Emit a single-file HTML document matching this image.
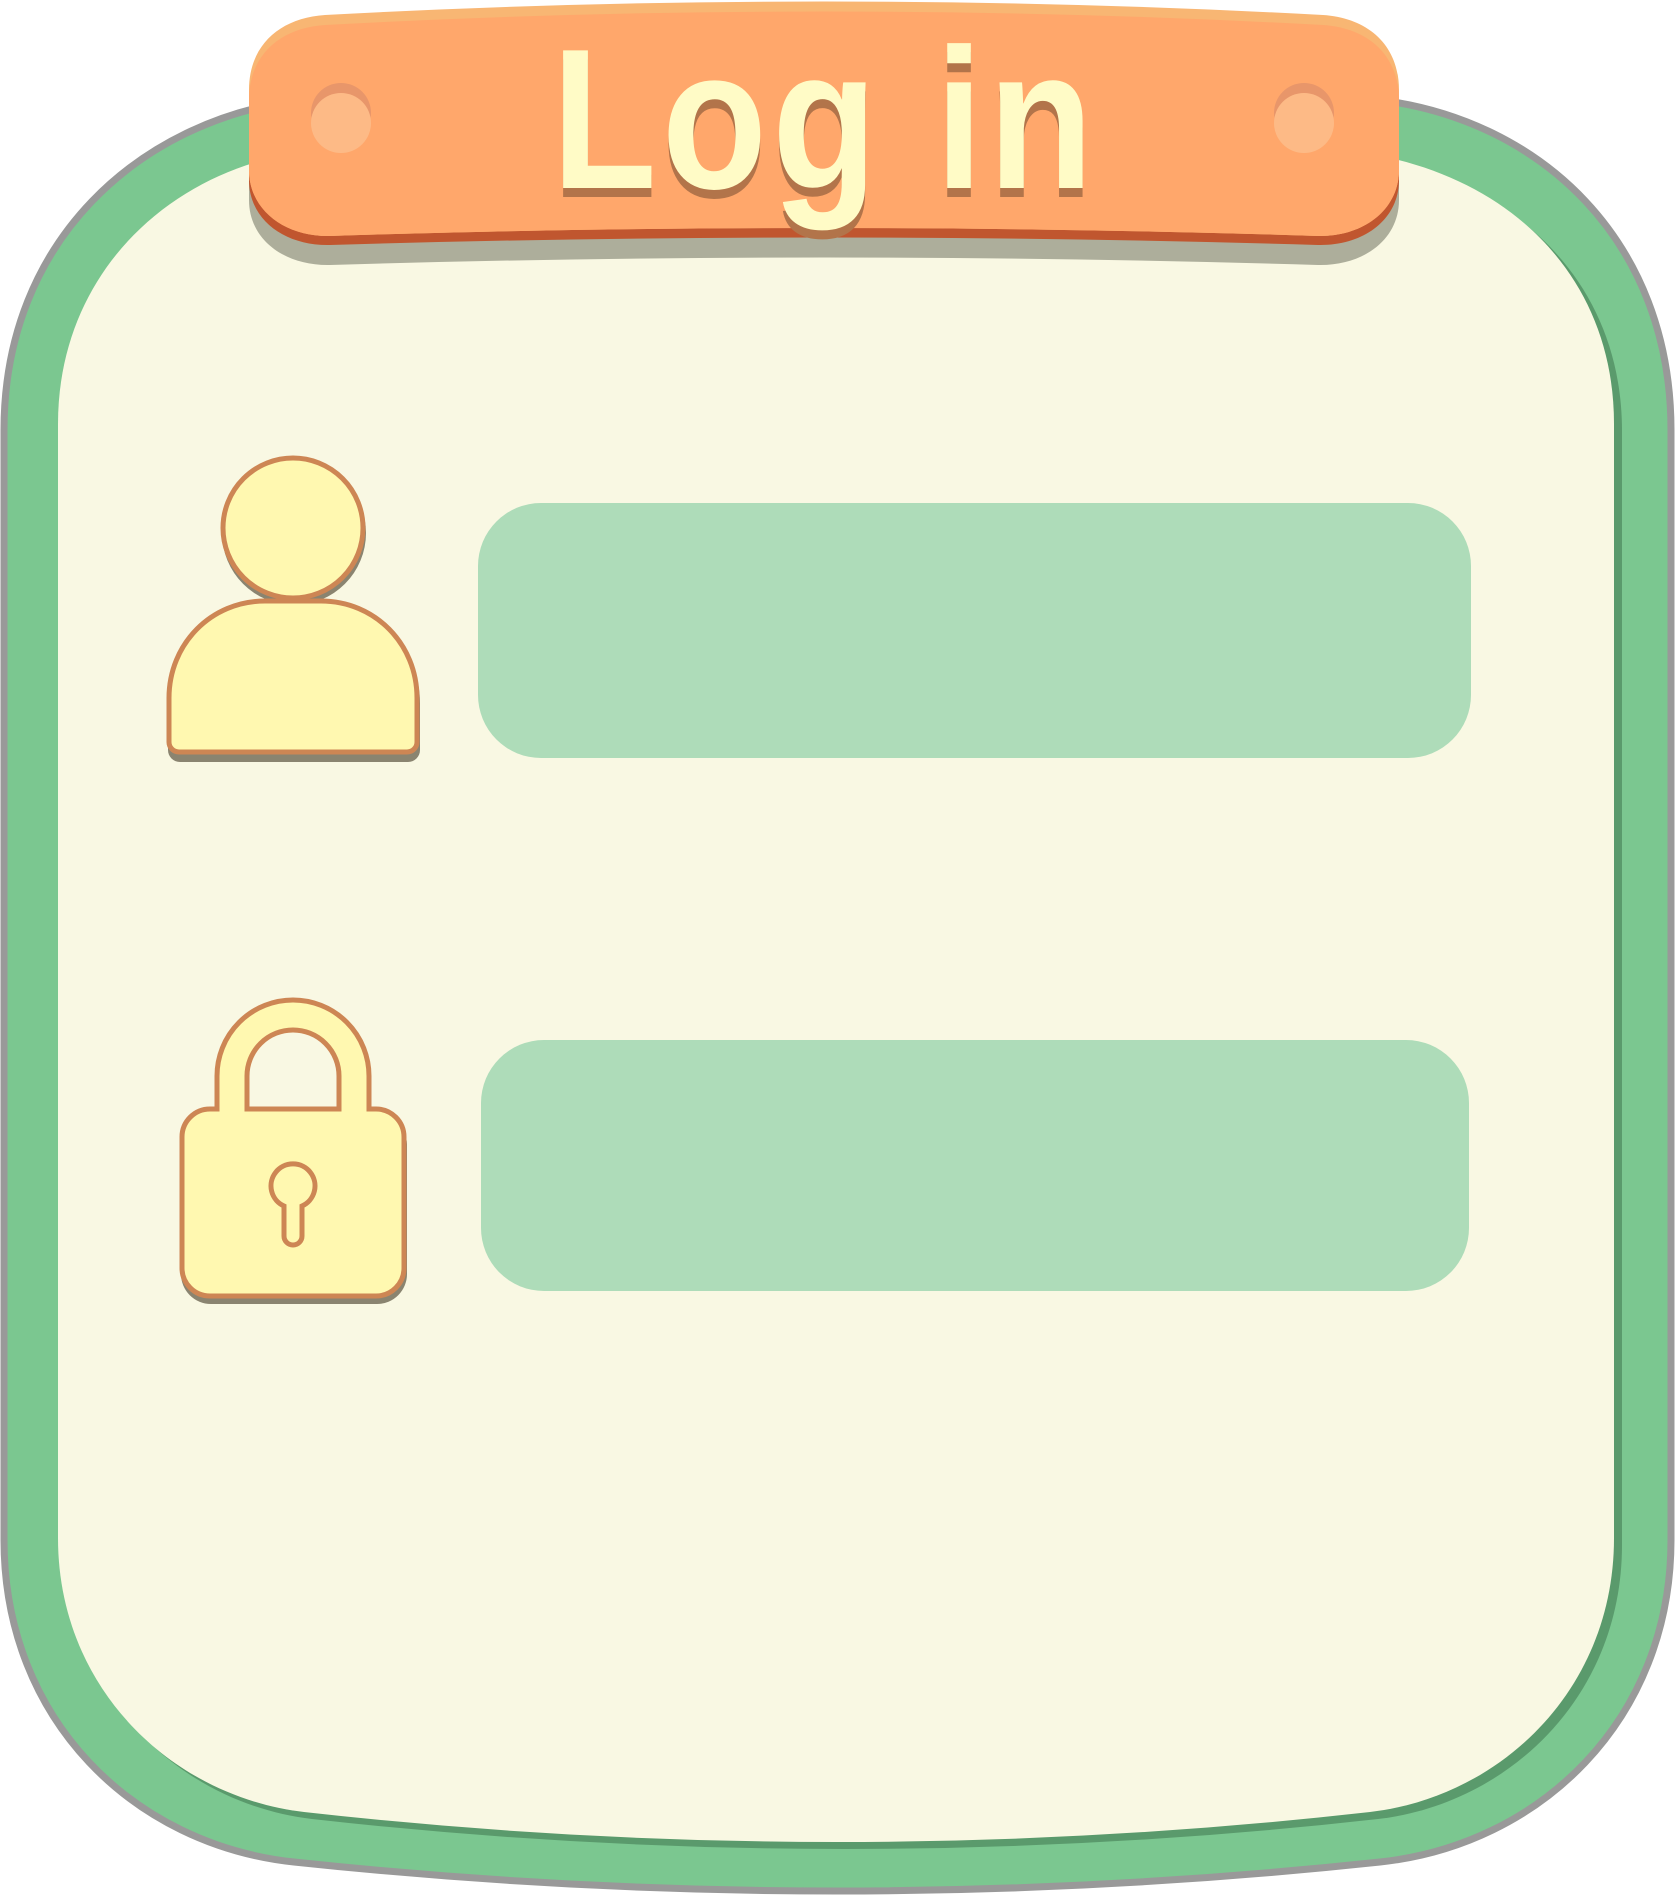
<!DOCTYPE html>
<html><head><meta charset="utf-8"><style>
html,body{margin:0;padding:0;background:#fff;width:1675px;height:1901px;overflow:hidden}
svg{display:block}
</style></head><body>
<svg width="1675" height="1901" viewBox="0 0 1675 1901" xmlns="http://www.w3.org/2000/svg">
  <path d="M4,430 C4,240 140,120 300,100 L1380,100 C1540,120 1671,240 1671,430 L1671,1540 C1671,1720 1540,1845 1380,1862 Q837,1920 294,1862 C134,1845 4,1720 4,1540 Z" fill="#7bc790" stroke="#999999" stroke-width="7"/>
  <path transform="translate(8,7)" d="M58,424 C58,260 190,155 330,150 L1340,150 C1500,165 1614,270 1614,424 L1614,1538 C1614,1690 1500,1797 1370,1812 Q837,1872 304,1812 C174,1797 58,1690 58,1538 Z" fill="#5a9a6c"/>
  <path d="M58,424 C58,260 190,155 330,150 L1340,150 C1500,165 1614,270 1614,424 L1614,1538 C1614,1690 1500,1797 1370,1812 Q837,1872 304,1812 C174,1797 58,1690 58,1538 Z" fill="#f9f8e3"/>
  <path d="M249,160 L249,200 C249,240 285,266 330,265 Q824,250 1318,265 C1363,266 1399,240 1399,200 L1399,160 Z" fill="#adae9b"/>
  <path d="M249,90 L249,180 C249,220 285,246 330,245 Q824,230 1318,245 C1363,246 1399,220 1399,180 L1399,90 Z" fill="#c0562f"/>
  <path d="M249,90 C249,45 280,18 325,15 Q824,-12 1323,15 C1368,18 1399,45 1399,90 L1399,170 C1399,210 1363,237 1318,236 Q824,220 330,236 C285,237 249,210 249,170 Z" fill="#f8b673"/>
  <path d="M249,100 C249,55 280,28 325,25 Q824,-2 1323,25 C1368,28 1399,55 1399,100 L1399,170 C1399,210 1363,237 1318,236 Q824,220 330,236 C285,237 249,210 249,170 Z" fill="#ffa76b"/>
  <circle cx="341" cy="113" r="30" fill="#e8966a"/>
  <circle cx="341" cy="123" r="30" fill="#fdba86"/>
  <circle cx="1304" cy="113" r="30" fill="#e8966a"/>
  <circle cx="1304" cy="123" r="30" fill="#fdba86"/>
  <g transform="translate(825,0) scale(0.86,1)">
    <text x="0" y="197" text-anchor="middle" font-family="Liberation Sans, sans-serif" font-weight="bold" font-size="200" fill="#b2744a" letter-spacing="6">Log in</text>
    <text x="0" y="188" text-anchor="middle" font-family="Liberation Sans, sans-serif" font-weight="bold" font-size="200" fill="#fffbc6" letter-spacing="6">Log in</text>
  </g>
  <rect x="478" y="503" width="993" height="255" rx="63" fill="#aedcb9"/>
  <rect x="481" y="1040" width="988" height="251" rx="63" fill="#aedcb9"/>
  <g fill="#8a8470" transform="translate(1,5)">
    <circle cx="293" cy="528" r="72"/>
    <path d="M265,600 L321,600 C375,600 419,644 419,698 L419,745 A12,12 0 0 1 407,757 L179,757 A12,12 0 0 1 167,745 L167,698 C167,644 211,600 265,600 Z"/>
  </g>
  <g fill="#fff8b0" stroke="#cd8654" stroke-width="5">
    <circle cx="293" cy="528" r="70"/>
    <path d="M265,601 L321,601 C375,601 417,644 417,698 L417,742 A10,10 0 0 1 407,752 L179,752 A10,10 0 0 1 169,742 L169,698 C169,644 211,601 265,601 Z"/>
  </g>
  <rect x="181" y="1115" width="226" height="189" rx="30" fill="#8a8470"/>
  <path fill-rule="evenodd" fill="#fff8b0" stroke="#cd8654" stroke-width="5" d="M182,1137 A28,28 0 0 1 210,1109 L217,1109 L217,1076 A76,76 0 0 1 369,1076 L369,1109 L376,1109 A28,28 0 0 1 404,1137 L404,1268 A28,28 0 0 1 376,1296 L210,1296 A28,28 0 0 1 182,1268 Z M247,1109 L339,1109 L339,1076 A46,46 0 0 0 247,1076 Z"/>
  <path d="M284,1206 A22,22 0 1 1 302,1206 L302,1236 A9,9 0 0 1 284,1236 Z" fill="#fff8b0" stroke="#cd8654" stroke-width="5"/>
</svg>
</body></html>
